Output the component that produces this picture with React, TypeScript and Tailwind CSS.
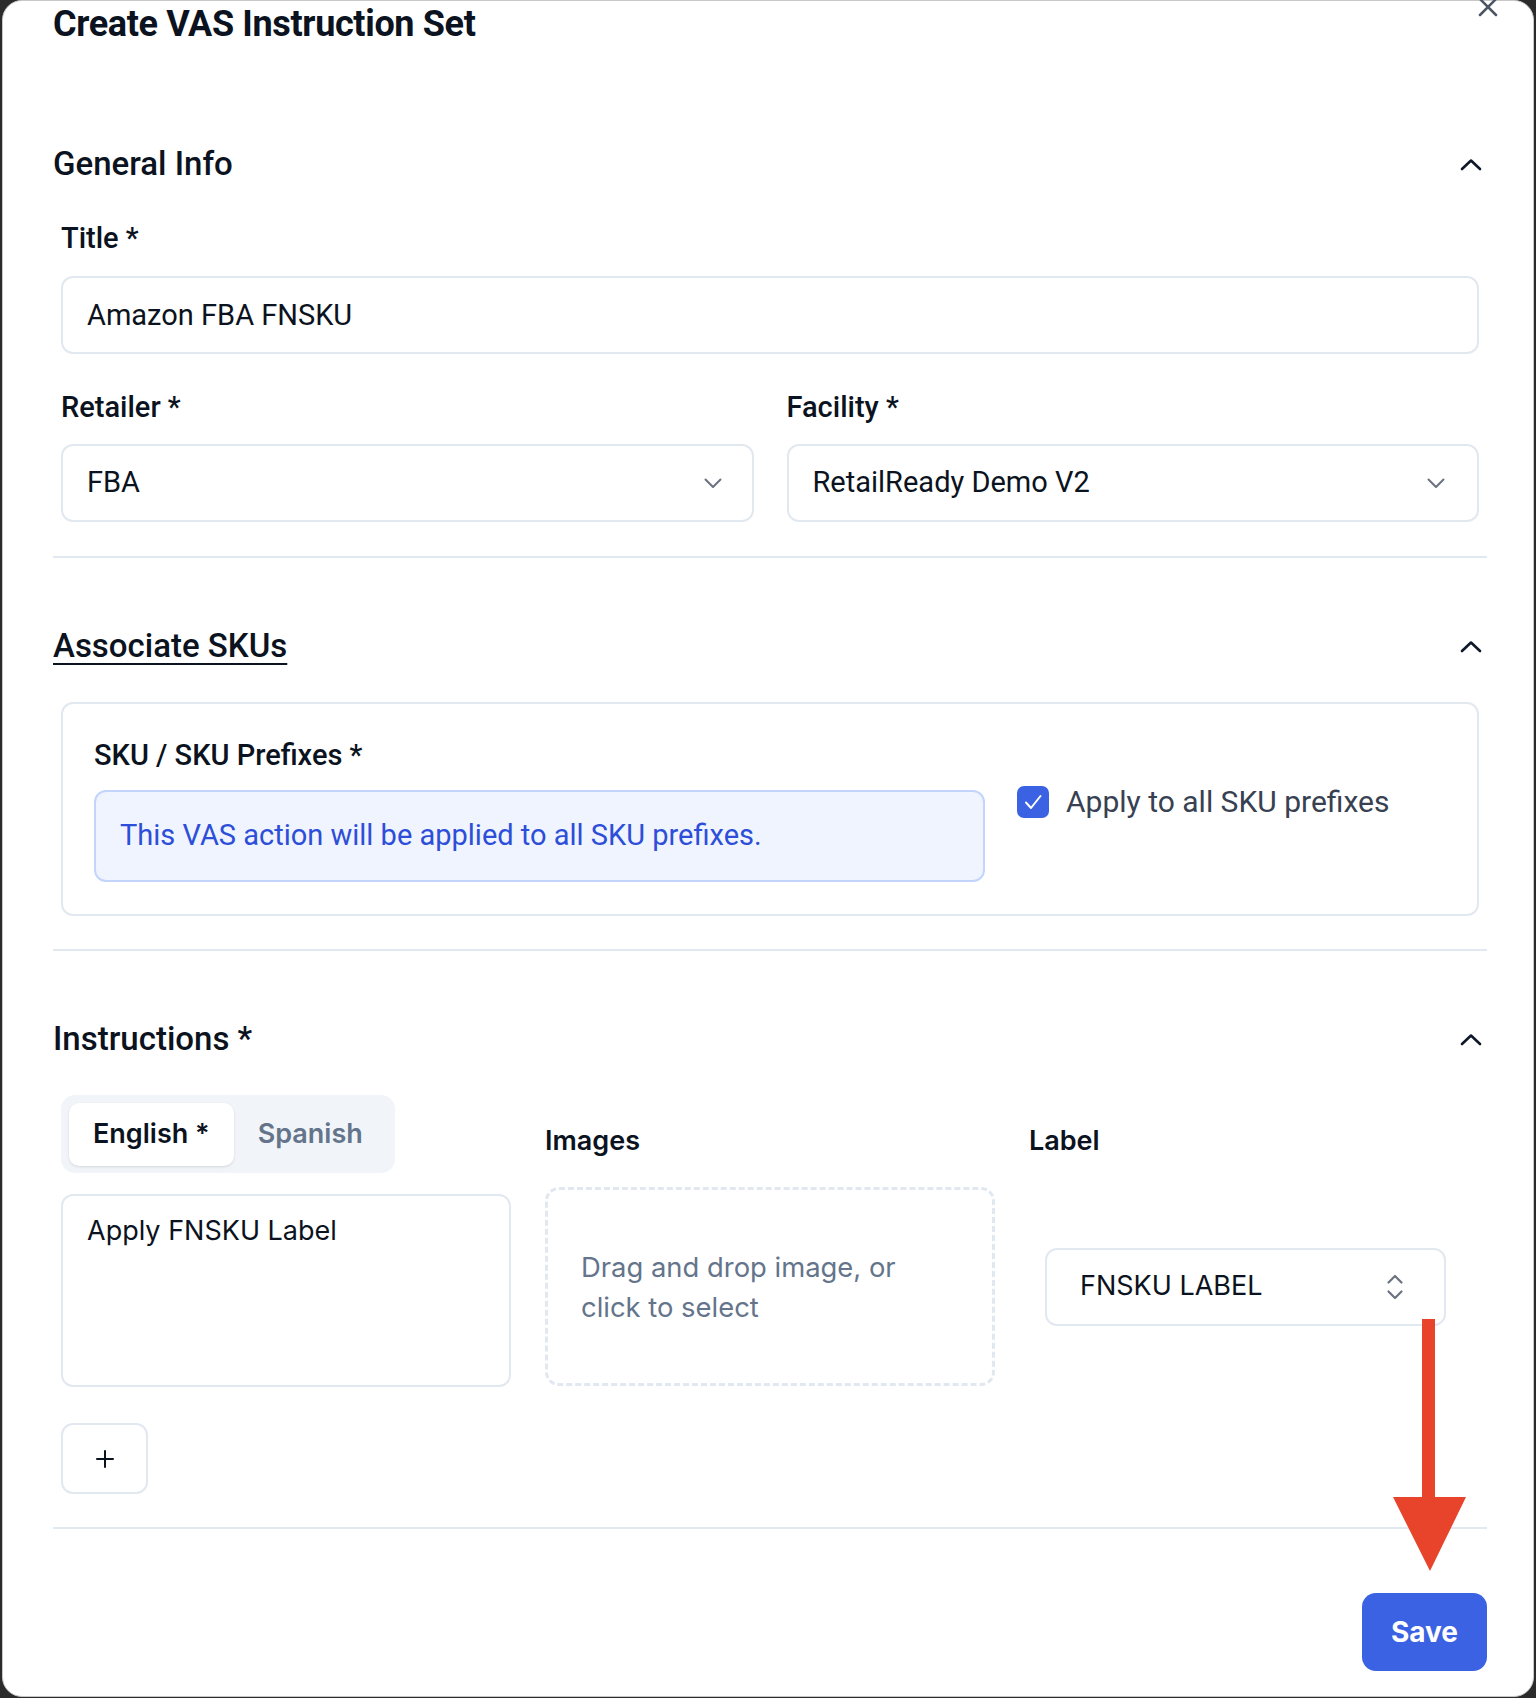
import React from "react";

function ChevronUp() {
  return (
    <svg width="22" height="13" viewBox="0 0 22 13" fill="none">
      <path d="M2 11 L11 2.5 L20 11" stroke="#0f172a" strokeWidth="2.6" strokeLinecap="round" strokeLinejoin="round" />
    </svg>
  );
}

function ChevronDown() {
  return (
    <svg width="18" height="11" viewBox="0 0 18 11" fill="none">
      <path d="M1.5 1.5 L9 9 L16.5 1.5" stroke="#6b7280" strokeWidth="2" strokeLinecap="round" strokeLinejoin="round" />
    </svg>
  );
}

function UpDown() {
  return (
    <svg width="18" height="28" viewBox="0 0 18 28" fill="none">
      <path d="M2.5 9.5 L9 3 L15.5 9.5" stroke="#6b7280" strokeWidth="2.2" strokeLinecap="round" strokeLinejoin="round" />
      <path d="M2.5 18.5 L9 25 L15.5 18.5" stroke="#6b7280" strokeWidth="2.2" strokeLinecap="round" strokeLinejoin="round" />
    </svg>
  );
}

function SectionHeader({ children, underline }: { children: React.ReactNode; underline?: boolean }) {
  return (
    <div className="flex h-[40px] items-center justify-between">
      <div
        className={
          underline
            ? "text-[33px] font-medium leading-[40px] text-[#0b1220] underline decoration-2 underline-offset-[6px]"
            : "text-[33px] font-medium leading-[40px] text-[#0b1220]"
        }
      >
        {children}
      </div>
      <div className="mr-[5px] flex items-center">
        <ChevronUp />
      </div>
    </div>
  );
}

export default function App() {
  return (
    <div className="relative h-[1698px] w-[1536px] overflow-hidden bg-[#2b2b2b]">
      <div className="relative ml-[2px] h-[1697px] w-[1532px] rounded-[20px] border border-[#c8c8c8] bg-white pl-[50px] pr-[46px] font-[Roboto,sans-serif] text-[#0b1220]">
        {/* Title */}
        <div className="flex h-[46px] items-center">
          <h1 className="text-[36px] font-bold leading-[44px] tracking-[-0.35px] text-[#0b1220]">Create VAS Instruction Set</h1>
        </div>

        {/* General Info */}
        <div className="mt-[97px]">
          <SectionHeader>General Info</SectionHeader>
        </div>
        <div className="px-[8px]">
          <div className="mt-[36px] text-[29px] font-medium leading-[36px]">Title *</div>
          <div className="mt-[20px] flex h-[78px] items-center rounded-[12px] border-2 border-[#e2e8f0] px-[24px] pt-[2px] text-[29px] text-[#0b1220]">
            Amazon FBA FNSKU
          </div>
          <div className="mt-[35px] grid grid-cols-2 gap-x-[33px]">
            <div>
              <div className="text-[29px] font-medium leading-[36px]">Retailer *</div>
              <div className="mt-[19px] flex h-[78px] items-center justify-between rounded-[12px] border-2 border-[#e2e8f0] pl-[24px] pr-[30px] text-[29px]">
                <span>FBA</span>
                <ChevronDown />
              </div>
            </div>
            <div>
              <div className="text-[29px] font-medium leading-[36px]">Facility *</div>
              <div className="mt-[19px] flex h-[78px] items-center justify-between rounded-[12px] border-2 border-[#e2e8f0] pl-[24px] pr-[32px] text-[29px]">
                <span>RetailReady Demo V2</span>
                <ChevronDown />
              </div>
            </div>
          </div>
        </div>
        <div className="mt-[34px] h-[2px] bg-[#e2e8f0]" />

        {/* Associate SKUs */}
        <div className="mt-[68px]">
          <SectionHeader underline>Associate SKUs</SectionHeader>
        </div>
        <div className="mx-[8px] mt-[36px] flex items-start rounded-[12px] border-2 border-[#e2e8f0] pb-[32px] pl-[31px] pt-[33px]">
          <div className="w-[891px]">
            <div className="text-[29px] font-medium leading-[36px]">SKU / SKU Prefixes *</div>
            <div className="mt-[17px] flex h-[92px] items-center rounded-[12px] border-2 border-[#c3d5fb] bg-[#eff4fe] pl-[24px] text-[29px] text-[#2d4ed8]">
              This VAS action will be applied to all SKU prefixes.
            </div>
          </div>
          <div className="ml-[32px] mt-[47px] flex items-center">
            <div className="flex h-[32px] w-[32px] items-center justify-center rounded-[7px] bg-[#3a62e2]">
              <svg width="20" height="18" viewBox="0 0 20 18" fill="none">
                <path d="M3 9.5 L8 15 L17.5 3" stroke="white" strokeWidth="2" strokeLinecap="round" strokeLinejoin="round" />
              </svg>
            </div>
            <span className="ml-[17px] text-[30px] leading-[36px] text-[#374151]">Apply to all SKU prefixes</span>
          </div>
        </div>
        <div className="mt-[33px] h-[2px] bg-[#e2e8f0]" />

        {/* Instructions */}
        <div className="mt-[68px]">
          <SectionHeader>Instructions *</SectionHeader>
        </div>
        <div className="mt-[36px] grid grid-cols-3 items-start gap-x-[34px] px-[8px] font-[Inter,sans-serif]">
          <div>
            <div className="inline-flex rounded-[14px] bg-[#f1f5f9] px-[8px] pb-[7px] pt-[8px]">
              <div className="flex h-[63px] items-center rounded-[10px] bg-white px-[24px] text-[27px] font-semibold text-[#0b1220] shadow-sm">
                English *
              </div>
              <div className="flex h-[63px] items-center px-[24px] text-[27px] font-semibold text-[#64748b]">Spanish</div>
            </div>
            <div className="mt-[21px] h-[193px] rounded-[12px] border-2 border-[#e2e8f0] px-[24px] pt-[17px] text-[27px] leading-[36px] text-[#0b1220]">
              Apply FNSKU Label
            </div>
            <div className="mt-[36px] flex h-[71px] w-[87px] items-center justify-center rounded-[12px] border-2 border-[#e2e8f0]">
              <svg width="20" height="20" viewBox="0 0 20 20" fill="none">
                <path d="M10 2 V18 M2 10 H18" stroke="#0b1220" strokeWidth="2" strokeLinecap="round" />
              </svg>
            </div>
          </div>
          <div>
            <div className="mt-[28px] text-[27px] font-semibold leading-[36px] text-[#0b1220]">Images</div>
            <div className="mt-[28px] flex h-[199px] items-center rounded-[14px] border-[3px] border-dashed border-[#e2e8f0] pl-[33px] text-[27.4px] leading-[40px] text-[#64748b]">
              <div>
                Drag and drop image, or
                <br />
                click to select
              </div>
            </div>
          </div>
          <div>
            <div className="mt-[28px] text-[27px] font-semibold leading-[36px] text-[#0b1220]">Label</div>
            <div className="mt-[28px] flex h-[199px] items-center pl-[16px] pr-[33px]">
              <div className="flex h-[78px] w-full items-center justify-between rounded-[12px] border-2 border-[#e2e8f0] pl-[33px] pr-[40px] text-[27px] text-[#0b1220]">
                <span>FNSKU LABEL</span>
                <UpDown />
              </div>
            </div>
          </div>
        </div>
        <div className="mt-[33px] h-[2px] bg-[#e2e8f0]" />

        {/* Footer */}
        <div className="mt-[64px] flex justify-end">
          <button className="flex h-[78px] w-[125px] items-center justify-center rounded-[14px] bg-[#3a62e2] font-[Inter,sans-serif] text-[28px] font-bold text-white">
            Save
          </button>
        </div>
      </div>

      {/* Close X */}
      <svg className="absolute left-[1477px] top-[-4px]" width="22" height="22" viewBox="0 0 22 22" fill="none">
        <path d="M3 3 L19 19 M19 3 L3 19" stroke="#4b5563" strokeWidth="2.5" strokeLinecap="round" />
      </svg>

      {/* Red annotation arrow */}
      <svg className="absolute left-[1390px] top-[1318px]" width="80" height="256" viewBox="0 0 80 256" fill="none">
        <rect x="32" y="1" width="13" height="182" fill="#e8432b" />
        <polygon points="3,179 76,179 40,253" fill="#e8432b" />
      </svg>
    </div>
  );
}
